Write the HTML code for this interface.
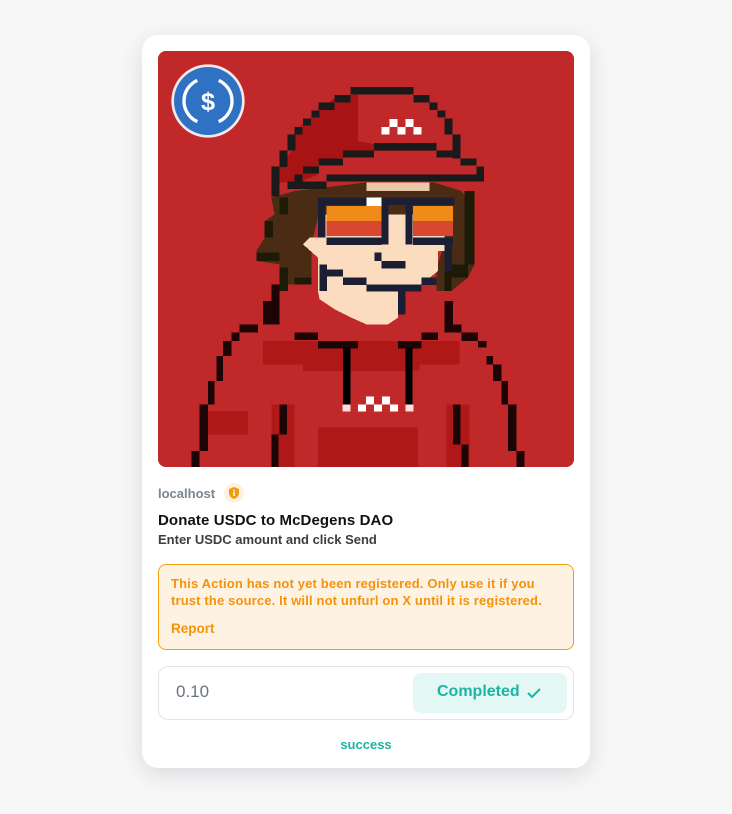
<!DOCTYPE html>
<html><head><style>
*{margin:0;padding:0;box-sizing:border-box}
body{width:732px;height:814px;background:#f7f7f8;font-family:"Liberation Sans",sans-serif;position:relative;overflow:hidden}
.card{position:absolute;left:142px;top:35px;width:448px;height:733px;background:#fff;border-radius:16px;box-shadow:0 6px 24px rgba(0,0,0,.12)}
.img{position:absolute;left:16px;top:16px;width:416px;height:416px;border-radius:8px;overflow:hidden;background:#c0282a}
.abs{position:absolute;white-space:nowrap}
</style></head><body>
<div class="card">
<div class="img">
<svg width="416" height="416" viewBox="0 0 1248 1248" shape-rendering="crispEdges">
<rect width="1248" height="1248" fill="#c0282a"/>
<polygon fill="#1e0505" points="340,700 365,700 365,820 300,820 300,850 245,850 245,870 220,870 220,915 195,915 195,990 170,990 170,1060 150,1060 150,1200 125,1200 125,1248 100,1248 100,1200 125,1200 125,1060 150,1060 150,990 175,990 175,915 195,915 195,870 220,870 220,845 245,845 245,820 315,820 315,750 340,750"/>
<polygon fill="#c0282a" points="125,1248 125,1200 150,1200 150,1060 175,1060 175,990 195,990 195,915 220,915 220,870 245,870 245,845 365,845 365,740 480,740 480,820 880,820 880,845 960,845 960,890 985,890 985,940 1005,940 1005,990 1030,990 1030,1060 1050,1060 1050,1200 1075,1200 1075,1248"/>
<polygon fill="#1e0505" points="860,750 885,750 885,820 910,820 910,845 960,845 960,870 985,870 985,915 1005,915 1005,940 1030,940 1030,990 1050,990 1050,1060 1075,1060 1075,1200 1100,1200 1100,1248 1075,1248 1075,1200 1050,1200 1050,1060 1030,1060 1030,990 1005,990 1005,940 985,940 985,890 960,890 960,870 910,870 910,845 860,845"/>
<rect x="315" y="870" width="590" height="70" fill="#b01818"/>
<rect x="435" y="940" width="350" height="20" fill="#b01818"/>
<rect x="150" y="1080" width="120" height="70" fill="#b01818"/>
<rect x="340" y="1060" width="70" height="188" fill="#b01818"/>
<rect x="865" y="1060" width="70" height="188" fill="#b01818"/>
<rect x="480" y="1130" width="300" height="118" fill="#b01818"/>
<rect x="365" y="1060" width="22" height="90" fill="#1e0505"/>
<rect x="340" y="1150" width="22" height="98" fill="#1e0505"/>
<rect x="885" y="1060" width="22" height="120" fill="#1e0505"/>
<rect x="910" y="1180" width="22" height="68" fill="#1e0505"/>
<rect x="410" y="845" width="70" height="22" fill="#1e0505"/>
<rect x="480" y="870" width="120" height="22" fill="#1e0505"/>
<rect x="720" y="870" width="70" height="22" fill="#1e0505"/>
<rect x="790" y="845" width="50" height="22" fill="#1e0505"/>
<rect x="555" y="890" width="22" height="170" fill="#000"/>
<rect x="742" y="890" width="22" height="170" fill="#000"/>
<rect x="553" y="1060" width="25" height="22" fill="#fdd"/>
<rect x="742" y="1060" width="25" height="22" fill="#fdd"/>
<g fill="#fff"><rect x="600" y="1060" width="24" height="22"/><rect x="648" y="1060" width="24" height="22"/><rect x="696" y="1060" width="24" height="22"/><rect x="624" y="1036" width="24" height="24"/><rect x="672" y="1036" width="24" height="24"/></g>
<polygon fill="#4a2c14" points="340,440 410,420 620,395 830,395 910,420 950,470 950,640 930,680 880,720 835,720 835,650 860,580 860,500 480,500 460,580 460,700 365,700 365,640 295,630 295,600 320,560 320,510 350,490"/>
<g fill="#1e1a08"><rect x="365" y="440" width="25" height="50"/><rect x="320" y="510" width="25" height="50"/><rect x="295" y="605" width="70" height="25"/><rect x="365" y="650" width="25" height="70"/><rect x="410" y="680" width="50" height="20"/></g>
<polygon fill="#1e1a08" points="920,420 950,420 950,640 930,640 930,680 880,680 880,720 860,720 860,640 920,640"/>
<polygon fill="#fcdcbe" points="480,490 860,490 860,600 840,600 840,660 790,700 720,720 720,800 690,820 625,820 580,800 530,775 485,745 480,720 480,620 435,580 455,560 480,560"/>
<rect x="625" y="395" width="190" height="25" fill="#e8c8a8"/>
<rect x="505" y="465" width="165" height="90" fill="#d84830"/>
<rect x="505" y="465" width="165" height="45" fill="#f08a18"/>
<rect x="765" y="465" width="120" height="90" fill="#d84830"/>
<rect x="765" y="465" width="120" height="45" fill="#f08a18"/>
<g fill="#1c1f33">
<rect x="480" y="440" width="410" height="22"/><rect x="480" y="440" width="22" height="120"/>
<rect x="670" y="440" width="22" height="140"/><rect x="742" y="440" width="22" height="140"/>
<rect x="505" y="560" width="165" height="22"/><rect x="765" y="560" width="120" height="22"/>
<rect x="860" y="580" width="22" height="80"/><rect x="485" y="640" width="22" height="80"/>
<rect x="650" y="605" width="20" height="25"/><rect x="670" y="630" width="72" height="22"/>
<rect x="505" y="655" width="50" height="22"/><rect x="555" y="680" width="70" height="22"/>
<rect x="625" y="700" width="165" height="22"/><rect x="720" y="720" width="22" height="70"/>
<rect x="790" y="680" width="45" height="22"/>
</g>
<rect x="625" y="440" width="45" height="25" fill="#fff"/>
<polygon fill="#c0282a" points="410,240 435,200 530,140 580,110 765,110 860,190 885,255 905,320 955,340 975,385 505,390 435,390 365,415 345,350 385,280"/>
<polygon fill="#a81414" points="530,140 600,130 600,270 650,280 835,280 835,300 555,300 555,320 480,330 480,370 435,390 365,395 365,350 400,300 410,240"/>
<g fill="#1a1a1a">
<rect x="578" y="108" width="188" height="22"/><rect x="530" y="132" width="48" height="22"/><rect x="766" y="132" width="48" height="22"/>
<rect x="482" y="155" width="48" height="22"/><rect x="814" y="155" width="24" height="22"/>
<rect x="460" y="178" width="24" height="22"/><rect x="838" y="178" width="24" height="22"/>
<rect x="435" y="202" width="24" height="22"/><rect x="860" y="202" width="24" height="48"/>
<rect x="410" y="228" width="24" height="22"/><rect x="388" y="250" width="24" height="48"/>
<rect x="884" y="250" width="24" height="72"/><rect x="365" y="298" width="24" height="50"/>
<rect x="340" y="346" width="24" height="90"/><rect x="648" y="276" width="188" height="22"/>
<rect x="555" y="298" width="93" height="22"/><rect x="836" y="298" width="48" height="22"/>
<rect x="482" y="322" width="73" height="22"/><rect x="908" y="322" width="48" height="22"/>
<rect x="435" y="346" width="48" height="22"/><rect x="956" y="346" width="22" height="44"/>
<rect x="505" y="370" width="473" height="22"/><rect x="410" y="370" width="24" height="22"/>
<rect x="388" y="392" width="118" height="22"/>
</g>
<g fill="#fff"><rect x="670" y="228" width="24" height="22"/><rect x="718" y="228" width="24" height="22"/><rect x="766" y="228" width="24" height="22"/><rect x="694" y="204" width="24" height="24"/><rect x="742" y="204" width="24" height="24"/></g>
<g shape-rendering="auto">
<circle cx="150" cy="150" r="110" fill="#f4e9e9"/>
<circle cx="150" cy="150" r="102" fill="#2f72c4"/>
<path d="M118,88 A68,68 0 0 0 118,212 M182,88 A68,68 0 0 1 182,212" stroke="#fff" stroke-width="10" fill="none"/>
<text x="150" y="177" text-anchor="middle" font-family="Liberation Sans" font-weight="bold" font-size="76" fill="#fff">$</text>
</g>
</svg>
</div>
<div class="abs" style="left:16px;top:451px;font-size:13px;font-weight:bold;color:#7b8591">localhost</div>
<div class="abs" style="left:82px;top:448px;width:20px;height:20px;border-radius:50%;background:#fff1dc">
<svg width="20" height="20" viewBox="0 0 20 20"><path d="M10 4 L15 6 V10 C15 13 12.5 15 10 16 C7.5 15 5 13 5 10 V6 Z" fill="#f59a0c"/><rect x="9.2" y="9" width="1.6" height="4" fill="#fff"/><rect x="9.2" y="6.8" width="1.6" height="1.5" fill="#fff"/></svg></div>
<div class="abs" style="left:16px;top:477px;font-size:15px;font-weight:bold;color:#111;letter-spacing:0.1px">Donate USDC to McDegens DAO</div>
<div class="abs" style="left:16px;top:497px;font-size:13px;font-weight:bold;color:#3a3d42">Enter USDC amount and click Send</div>
<div style="position:absolute;left:16px;top:529px;width:416px;height:86px;border:1px solid #f5a00e;background:#fef3e3;border-radius:8px"></div>
<div class="abs" style="left:29px;top:540px;font-size:13px;font-weight:bold;color:#f5920c;line-height:17px;letter-spacing:0.15px">This Action has not yet been registered. Only use it if you<br>trust the source. It will not unfurl on X until it is registered.</div>
<div class="abs" style="left:29px;top:586px;font-size:13.5px;font-weight:bold;color:#f5920c">Report</div>
<div style="position:absolute;left:16px;top:631px;width:416px;height:54px;border:1px solid #e2e4e8;border-radius:10px"></div>
<div class="abs" style="left:34px;top:647px;font-size:17px;color:#6b7280">0.10</div>
<div style="position:absolute;left:271px;top:638px;width:154px;height:40px;background:#e3f7f4;border-radius:8px"></div>
<div class="abs" style="left:295px;top:648px;font-size:16px;font-weight:bold;color:#1bb5a4">Completed</div>
<svg class="abs" style="left:384px;top:651px" width="16" height="14" viewBox="0 0 16 14"><path d="M2 7 L6 11 L14 3" stroke="#1bb5a4" stroke-width="2" fill="none"/></svg>
<div class="abs" style="left:0;width:448px;text-align:center;top:702px;font-size:13px;font-weight:bold;color:#1bb5a4">success</div>
</div>
</body></html>
